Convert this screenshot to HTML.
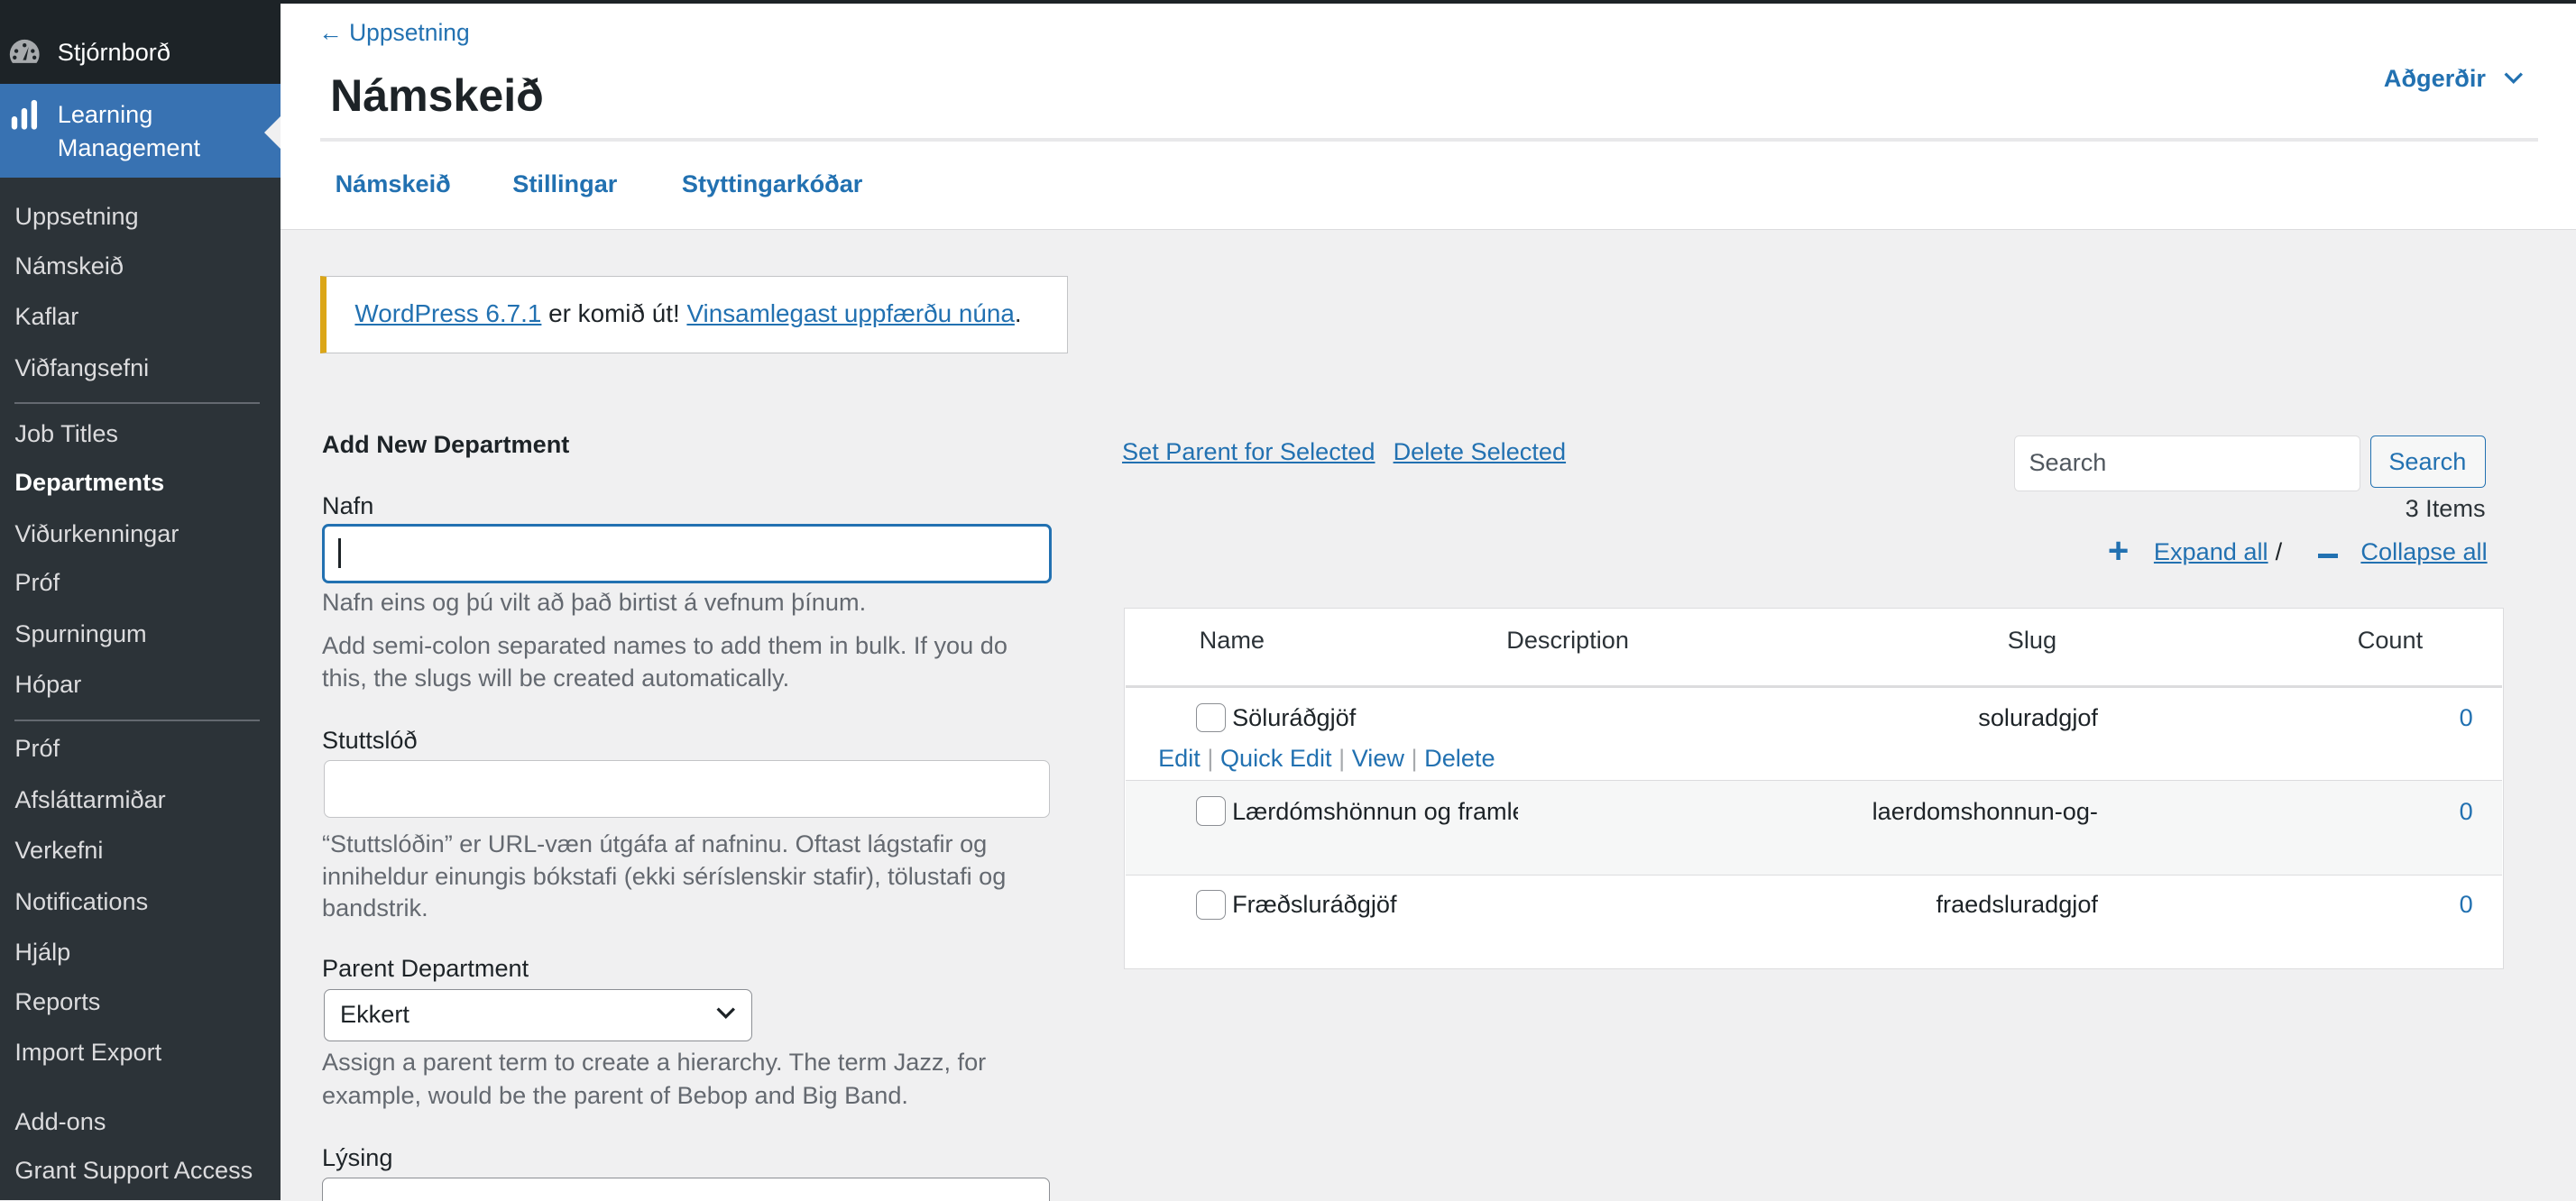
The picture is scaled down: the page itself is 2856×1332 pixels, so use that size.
<!DOCTYPE html>
<html><head><meta charset="utf-8"><style>
*{margin:0;padding:0;box-sizing:border-box}
html,body{width:2856px;height:1332px;overflow:hidden;background:#f0f0f1}
#r{zoom:1.82143;width:1568px;height:731px;position:relative;font-family:"Liberation Sans",sans-serif;font-size:14.9px;color:#1d2327}
.a{position:absolute;white-space:nowrap;line-height:20px}
.sb{position:absolute;left:0;top:0;width:171px;height:731px;background:#2c3338}
.si{position:absolute;left:9px;color:#dcdcde;font-size:14.9px;line-height:20px}
.sep{position:absolute;left:9px;width:149px;height:1px;background:#646970}
.bl{color:#2271b1}
.u{text-decoration:underline}
.hp{color:#646970}
.b{font-weight:bold}
</style></head><body><div id="r">
<div class="sb">
 <div style="position:absolute;left:0;top:0;width:171px;height:51px;background:#1d2327"></div>
 <div style="position:absolute;left:0;top:51px;width:171px;height:57px;background:#3872b2"></div>
 <svg style="position:absolute;left:5px;top:23px" width="20" height="18" viewBox="0 0 20 18"><path d="M10 1a9 9 0 0 0-9 9c0 2 .6 3.8 1.7 5.3h14.6A9 9 0 0 0 19 10a9 9 0 0 0-9-9z" fill="#a7aaad"/><circle cx="5" cy="8" r="1.2" fill="#1d2327"/><circle cx="15" cy="8" r="1.2" fill="#1d2327"/><circle cx="10" cy="4.5" r="1.2" fill="#1d2327"/><circle cx="4" cy="12" r="1.2" fill="#1d2327"/><circle cx="16" cy="12" r="1.2" fill="#1d2327"/><path d="M12.5 5.5L9 13.5h2z" fill="#1d2327"/></svg>
 <div class="si" style="top:22px;left:35px;color:#fff">Stjórnborð</div>
 <svg style="position:absolute;left:6px;top:60px" width="18" height="20" viewBox="0 0 18 20"><rect x="1" y="11" width="3.5" height="8" rx="1.7" fill="#fff"/><rect x="7" y="6" width="3.5" height="13" rx="1.7" fill="#fff"/><rect x="13" y="1" width="3.5" height="18" rx="1.7" fill="#fff"/></svg>
 <div class="si" style="top:60px;left:35px;color:#fff">Learning<br>Management</div>
 <div style="position:absolute;left:161px;top:71px;width:0;height:0;border-top:10px solid transparent;border-bottom:10px solid transparent;border-right:10px solid #f0f0f1"></div>
 <div class="si" style="top:122px">Uppsetning</div>
 <div class="si" style="top:152px">Námskeið</div>
 <div class="si" style="top:183px">Kaflar</div>
 <div class="si" style="top:214px">Viðfangsefni</div>
 <div class="sep" style="top:245px"></div>
 <div class="si" style="top:254px">Job Titles</div>
 <div class="si b" style="top:284px;color:#fff">Departments</div>
 <div class="si" style="top:315px">Viðurkenningar</div>
 <div class="si" style="top:345px">Próf</div>
 <div class="si" style="top:376px">Spurningum</div>
 <div class="si" style="top:407px">Hópar</div>
 <div class="sep" style="top:438px"></div>
 <div class="si" style="top:446px">Próf</div>
 <div class="si" style="top:477px">Afsláttarmiðar</div>
 <div class="si" style="top:508px">Verkefni</div>
 <div class="si" style="top:539px">Notifications</div>
 <div class="si" style="top:570px">Hjálp</div>
 <div class="si" style="top:600px">Reports</div>
 <div class="si" style="top:631px">Import Export</div>
 <div class="si" style="top:673px">Add-ons</div>
 <div class="si" style="top:703px">Grant Support Access</div>
</div>
<div style="position:absolute;left:171px;top:0;width:1397px;height:2px;background:#1d2327"></div>
<div style="position:absolute;left:171px;top:2px;width:1397px;height:138px;background:#fff;border-bottom:1px solid #dcdcde"></div>
<div class="a bl" style="left:194px;top:10px;font-size:14.5px">← Uppsetning</div>
<div class="a b" style="left:201px;top:42px;font-size:27.5px;line-height:32px">Námskeið</div>
<div class="a bl b" style="left:1451px;top:38px">Aðgerðir <svg width="14" height="10" viewBox="0 0 14 10" style="margin-left:6px"><path d="M2 2l5 5 5-5" stroke="#2271b1" stroke-width="1.8" fill="none"/></svg></div>
<div style="position:absolute;left:195px;top:84px;width:1350px;height:2px;background:#e8e8ea"></div>
<div class="a bl b" style="left:204px;top:102px">Námskeið</div>
<div class="a bl b" style="left:312px;top:102px">Stillingar</div>
<div class="a bl b" style="left:415px;top:102px">Styttingarkóðar</div>

<div style="position:absolute;left:195px;top:168px;width:455px;height:47px;background:#fff;border:1px solid #c3c4c7;border-left:4px solid #dba617"></div>
<div class="a" style="left:216px;top:181px;font-size:15.3px"><span class="bl u">WordPress 6.7.1</span> er komið út! <span class="bl u">Vinsamlegast uppfærðu núna</span>.</div>

<div class="a b" style="left:196px;top:261px">Add New Department</div>
<div class="a" style="left:196px;top:298px">Nafn</div>
<div style="position:absolute;left:196px;top:319px;width:444px;height:36px;background:#fff;border:2px solid #2271b1;border-radius:4px"></div>
<div style="position:absolute;left:206px;top:328px;width:1.5px;height:18px;background:#1d2327"></div>
<div class="a hp" style="left:196px;top:357px">Nafn eins og þú vilt að það birtist á vefnum þínum.</div>
<div class="a hp" style="left:196px;top:383px">Add semi-colon separated names to add them in bulk. If you do<br>this, the slugs will be created automatically.</div>
<div class="a" style="left:196px;top:441px">Stuttslóð</div>
<div style="position:absolute;left:197px;top:463px;width:442px;height:35px;background:#fff;border:1px solid #c3c4c7;border-radius:4px"></div>
<div class="a hp" style="left:196px;top:504px;line-height:19.5px">“Stuttslóðin” er URL-væn útgáfa af nafninu. Oftast lágstafir og<br>inniheldur einungis bókstafi (ekki séríslenskir stafir), tölustafi og<br>bandstrik.</div>
<div class="a" style="left:196px;top:580px">Parent Department</div>
<div style="position:absolute;left:197px;top:602px;width:261px;height:32px;background:#fff;border:1px solid #8c8f94;border-radius:4px"></div>
<div class="a" style="left:207px;top:608px">Ekkert</div>
<svg style="position:absolute;left:435px;top:612px" width="14" height="10" viewBox="0 0 14 10"><path d="M2 2l5 5 5-5" stroke="#1d2327" stroke-width="1.8" fill="none"/></svg>
<div class="a hp" style="left:196px;top:637px">Assign a parent term to create a hierarchy. The term Jazz, for<br>example, would be the parent of Bebop and Big Band.</div>
<div class="a" style="left:196px;top:695px">Lýsing</div>
<div style="position:absolute;left:196px;top:717px;width:443px;height:30px;background:#fff;border:1px solid #8c8f94;border-radius:4px"></div>

<div class="a bl u" style="left:683px;top:265px">Set Parent for Selected</div>
<div class="a bl u" style="left:848px;top:265px">Delete Selected</div>
<div style="position:absolute;left:1226px;top:265px;width:211px;height:34px;background:#fff;border:1px solid #dcdcde;border-radius:3px"></div>
<div class="a" style="left:1235px;top:272px;color:#50575e">Search</div>
<div style="position:absolute;left:1443px;top:265px;width:70px;height:32px;background:#f6f7f7;border:1px solid #2271b1;border-radius:3px"></div>
<div class="a bl" style="left:1454px;top:271px">Search</div>
<div class="a" style="left:1464px;top:300px;color:#2c3338">3 Items</div>
<div class="a bl b" style="left:1283px;top:324px;font-size:22px;line-height:24px">+</div>
<div class="a bl u" style="left:1311px;top:326px">Expand all</div>
<div class="a" style="left:1385px;top:326px">/</div>
<div style="position:absolute;left:1411px;top:337px;width:12px;height:3px;background:#2271b1"></div>
<div class="a bl u" style="left:1437px;top:326px">Collapse all</div>

<div style="position:absolute;left:684px;top:370px;width:840px;height:220px;background:#fff;border:1px solid #dcdcde"></div>
<div style="position:absolute;left:685px;top:417px;width:838px;height:2px;background:#dcdcde"></div>
<div style="position:absolute;left:685px;top:475px;width:838px;height:58px;background:#f6f7f7;border-top:1px solid #dcdcde;border-bottom:1px solid #dcdcde"></div>
<div class="a" style="left:730px;top:380px;color:#2c3338">Name</div>
<div class="a" style="left:917px;top:380px;color:#2c3338">Description</div>
<div class="a" style="left:1222px;top:380px;color:#2c3338">Slug</div>
<div class="a" style="left:1435px;top:380px;color:#2c3338">Count</div>

<div style="position:absolute;left:728px;top:428px;width:18px;height:18px;border:1px solid #8c8f94;border-radius:4px;background:#fff"></div>
<div class="a" style="left:750px;top:427px">Söluráðgjöf</div>
<div class="a" style="right:291px;top:427px">soluradgjof</div>
<div class="a bl" style="left:1497px;top:427px">0</div>
<div class="a bl" style="left:705px;top:452px">Edit <span style="color:#a7aaad">|</span> Quick Edit <span style="color:#a7aaad">|</span> View <span style="color:#a7aaad">|</span> Delete</div>

<div style="position:absolute;left:728px;top:485px;width:18px;height:18px;border:1px solid #8c8f94;border-radius:4px;background:#fff"></div>
<div class="a" style="left:750px;top:484px;width:174px;overflow:hidden">Lærdómshönnun og framleiðsla</div>
<div class="a" style="right:291px;top:484px">laerdomshonnun-og-</div>
<div class="a bl" style="left:1497px;top:484px">0</div>

<div style="position:absolute;left:728px;top:542px;width:18px;height:18px;border:1px solid #8c8f94;border-radius:4px;background:#fff"></div>
<div class="a" style="left:750px;top:541px">Fræðsluráðgjöf</div>
<div class="a" style="right:291px;top:541px">fraedsluradgjof</div>
<div class="a bl" style="left:1497px;top:541px">0</div>
</div></body></html>
